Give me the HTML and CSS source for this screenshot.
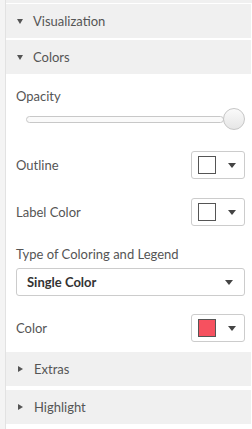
FILE: index.html
```html
<!DOCTYPE html>
<html lang="en">
<head>
  <meta charset="UTF-8" />
  <title>Layer style</title>
  <link rel="stylesheet" href="styles.css">
</head>
<body>
  <div class="panel">
    <div class="head-tail"></div>

    <div class="section-head open"><span class="arrow"></span>Visualization</div>
    <div class="section-head open"><span class="arrow"></span>Colors</div>

    <div class="section-body">
      <div class="field-label first">Opacity</div>
      <div class="slider">
        <div class="track"></div>
        <div class="thumb"></div>
      </div>

      <div class="row row-outline">
        <span class="row-label">Outline</span>
        <button class="swatch-btn"><span class="swatch"></span><span class="caret"></span></button>
      </div>

      <div class="row row-label-color">
        <span class="row-label">Label Color</span>
        <button class="swatch-btn"><span class="swatch"></span><span class="caret"></span></button>
      </div>

      <div class="field-label type-label">Type of Coloring and Legend</div>
      <div class="select">
        <span>Single Color</span>
        <span class="caret"></span>
      </div>

      <div class="row row-color">
        <span class="row-label">Color</span>
        <button class="swatch-btn"><span class="swatch red"></span><span class="caret"></span></button>
      </div>
    </div>

    <div class="section-head"><span class="arrow"></span>Extras</div>
    <div class="section-head last"><span class="arrow"></span>Highlight</div>
  </div>
</body>
</html>
```

FILE: styles.css
```css
/* painel lateral de estilo */
body {
  margin: 0;
  padding: 0;
  font-family: "Lato", "Open Sans", sans-serif;
  font-size: 13px;
  color: #555;
  background: #f4f4f4;
}

.panel {
  margin-left: 5px;
  border-left: 1px solid #e2e2e2;
  background: #fff;
  height: 429px;
  overflow: hidden;
}

.head-tail {
  height: 3px;
  margin-bottom: 1px;
  background: #f0f0f0;
}

.section-head {
  display: flex;
  align-items: center;
  height: 34px;
  margin-right: 1px;
  padding-left: 11px;
  background: #f0f0f0;
  color: #555;
  font-size: 13px;
}
.section-head + .section-head {
  margin-top: 2px;
}
.section-head.last {
  margin-top: 4px;
}

.arrow {
  width: 0;
  height: 0;
  margin-right: 10px;
  border-left: 3px solid transparent;
  border-right: 3px solid transparent;
  border-top: 5px solid #555;
}
.section-head:not(.open) .arrow {
  margin-left: 1px;
  margin-right: 11px;
  border-top: 3px solid transparent;
  border-bottom: 3px solid transparent;
  border-left: 5px solid #555;
  border-right: 0;
}

.section-body {
  padding: 1px 7px 10px 10px;
}

.field-label {
  line-height: 18px;
}
.field-label.first {
  margin-top: 12px;
}

.slider {
  display: flex;
  align-items: center;
  margin-top: 3px;
  padding-left: 10px;
}
.track {
  flex: 1;
  height: 5px;
  border: 1px solid #c8c8c8;
  border-radius: 4px;
  background: #fafafa;
}
.thumb {
  width: 20px;
  height: 20px;
  margin-left: -1px;
  border: 1px solid #c6c6c6;
  border-radius: 50%;
  background: linear-gradient(#fafafa, #e6e6e6);
}

.row {
  display: flex;
  align-items: center;
  justify-content: space-between;
}
.row-outline { margin-top: 21px; }
.row-label-color { margin-top: 19px; }
.row-color { margin-top: 18px; }

.swatch-btn {
  display: flex;
  align-items: center;
  width: 54px;
  height: 28px;
  padding: 0 0 0 6px;
  border: 1px solid #ccc;
  border-radius: 3px;
  background: #fff;
  cursor: pointer;
}
.swatch {
  width: 16px;
  height: 16px;
  border: 1px solid #555;
  background: #fff;
}
.swatch.red {
  background: #f6515f;
}
.swatch-btn .caret {
  margin-left: 12px;
}

.caret {
  width: 0;
  height: 0;
  border-left: 4px solid transparent;
  border-right: 4px solid transparent;
  border-top: 5px solid #444;
}

.type-label {
  margin-top: 19px;
}

.select {
  display: flex;
  align-items: center;
  justify-content: space-between;
  height: 26px;
  margin-top: 5px;
  padding: 0 11px 0 10px;
  border: 1px solid #ccc;
  border-radius: 3px;
  font-weight: bold;
  color: #333;
}
```
